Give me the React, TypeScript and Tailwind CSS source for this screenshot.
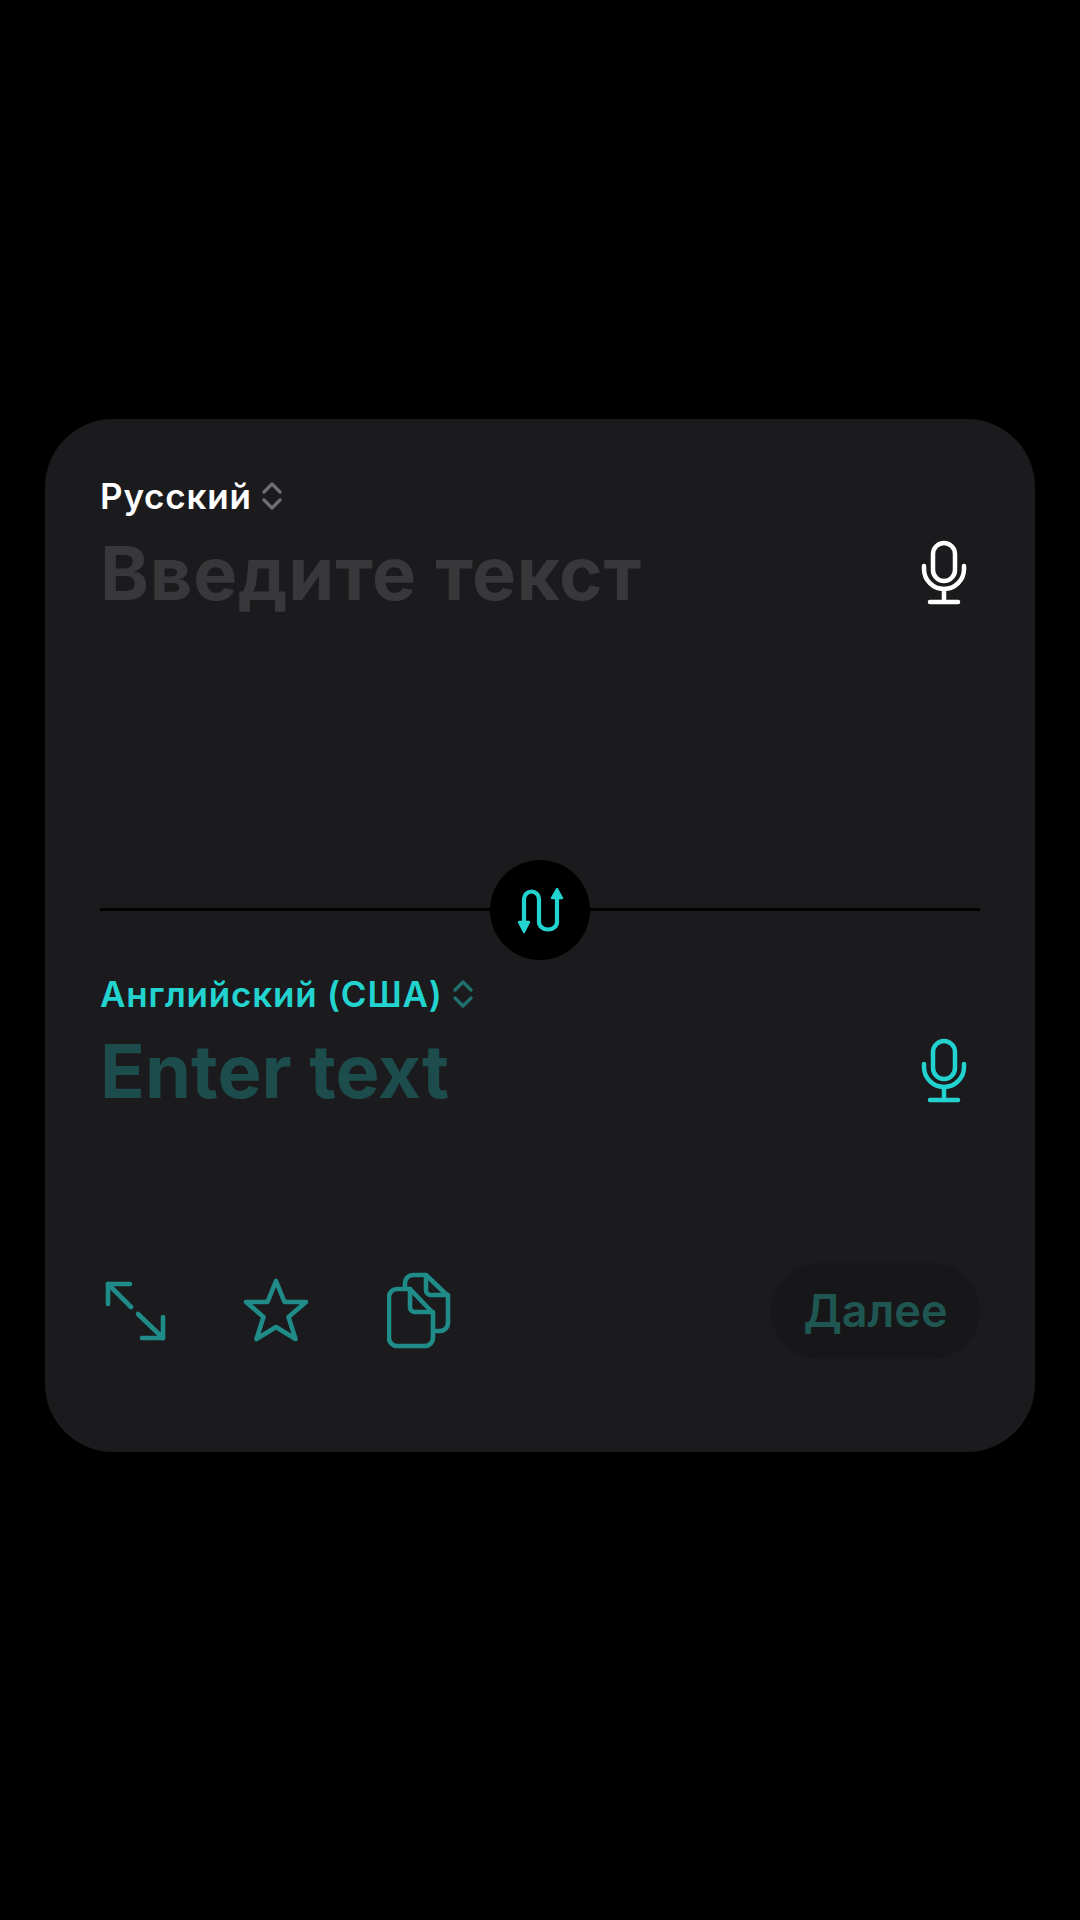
import React from "react";

const font = { fontFamily: "Inter, 'Noto Sans', sans-serif" };

function Chevrons({ color }: { color: string }) {
  return (
    <svg width="24" height="32" viewBox="0 0 24 32" fill="none" stroke={color} strokeWidth="3.4" strokeLinecap="round" strokeLinejoin="round">
      <path d="M4 12 L12 4 L20 12" />
      <path d="M4 20 L12 28 L20 20" />
    </svg>
  );
}

function MicIcon({ color }: { color: string }) {
  return (
    <svg width="50" height="70" viewBox="920 538 50 70" fill="none" stroke={color} strokeWidth="4.5" strokeLinecap="round" strokeLinejoin="round">
      <rect x="934" y="543" width="22" height="38" rx="11" />
      <path d="M925 566 V569 a20 20 0 0 0 40 0 V566" />
      <path d="M945 589 V602" />
      <path d="M931 602 H959" />
    </svg>
  );
}

function SwapIcon() {
  return (
    <svg width="50" height="50" viewBox="515 884 50 50" fill="none" stroke="#22d3cf" strokeWidth="4.2" strokeLinecap="round" strokeLinejoin="round">
      <path d="M524 920 V898 a7.5 7.5 0 0 1 15 0 V921 a9 7.5 0 0 0 18 0 V896" />
      <path d="M519 921 H529 L524 931 Z" fill="#22d3cf" strokeWidth="2.4" />
      <path d="M552 897 H562 L557 888 Z" fill="#22d3cf" strokeWidth="2.4" />
    </svg>
  );
}

function ExpandIcon() {
  return (
    <svg width="64" height="64" viewBox="103 1278 64 64" fill="none" stroke="#1f8c89" strokeWidth="4.6" strokeLinecap="round" strokeLinejoin="round">
      <path d="M130 1283 H108 V1303" />
      <path d="M108 1283 L131 1306" />
      <path d="M142 1337 H163 V1316" />
      <path d="M163 1337 L138 1313" />
    </svg>
  );
}

function StarIcon() {
  return (
    <svg width="70" height="70" viewBox="241 1277 70 70" fill="none" stroke="#1f8c89" strokeWidth="4.6" strokeLinejoin="round">
      <polygon points="276,1282 284.5,1303 306,1303 288.5,1318 295.5,1340 276,1328 256.5,1340 263.5,1318 246,1303 267.5,1303" />
    </svg>
  );
}

function CopyIcon() {
  return (
    <svg width="64" height="78" viewBox="387 1272 64 78" fill="none" stroke="#1f8c89" strokeWidth="4.6" strokeLinecap="round" strokeLinejoin="round">
      <path d="M405 1289 V1283 a8 8 0 0 1 8 -8 H426 L448 1296 V1323 a8 8 0 0 1 -8 8 H433" />
      <path d="M426 1275 V1290 a5 5 0 0 0 5 5 H448" />
      <path d="M397 1289 H410 L433 1313 V1338 a8 8 0 0 1 -8 8 H397 a8 8 0 0 1 -8 -8 V1297 a8 8 0 0 1 8 -8 Z" />
      <path d="M410 1289 V1307 a5 5 0 0 0 5 5 H433" />
    </svg>
  );
}

export default function App() {
  return (
    <div className="min-h-[1920px] bg-black pt-[419px] px-[45px]" style={font}>
      <div className="h-[1033px] rounded-[68px] bg-[#1b1b1d] px-[55px] pt-[55px]">
        {/* source language */}
        <div className="h-[434px]">
          <div className="flex h-[44px] items-center gap-[8px] text-[35px] font-semibold tracking-[0.8px] text-white">
            Русский
            <Chevrons color="#6e6e70" />
          </div>
          <div className="mt-[15px] flex h-[80px] items-center justify-between pr-[11px]">
            <span className="text-[74px] font-bold leading-none tracking-[0.8px] text-[#38383a]">Введите текст</span>
            <MicIcon color="#ffffff" />
          </div>
        </div>

        {/* divider with swap button */}
        <div className="relative h-[3px] bg-black">
          <div className="absolute left-1/2 top-1/2 flex h-[100px] w-[100px] -translate-x-1/2 -translate-y-1/2 items-center justify-center rounded-full bg-black">
            <SwapIcon />
          </div>
        </div>

        {/* target language */}
        <div className="mt-[61px] flex h-[44px] items-center gap-[8px] text-[35px] font-semibold tracking-[0.8px] text-[#22d3cf]">
          Английский (США)
          <Chevrons color="#1f6f6c" />
        </div>
        <div className="mt-[15px] flex h-[80px] items-center justify-between pr-[11px]">
          <span className="text-[74px] font-bold leading-none text-[#1c4d4c]">Enter text</span>
          <MicIcon color="#22d3cf" />
        </div>

        {/* actions */}
        <div className="mt-[152px] flex items-center justify-between">
          <div className="flex items-center gap-[74px] pl-[3px]">
            <ExpandIcon />
            <StarIcon />
            <div className="ml-[2px]">
              <CopyIcon />
            </div>
          </div>
          <button className="flex h-[96px] w-[209px] items-center justify-center rounded-full bg-[#171719] text-[45px] font-semibold text-[#1f5652]">
            Далее
          </button>
        </div>
      </div>
    </div>
  );
}
